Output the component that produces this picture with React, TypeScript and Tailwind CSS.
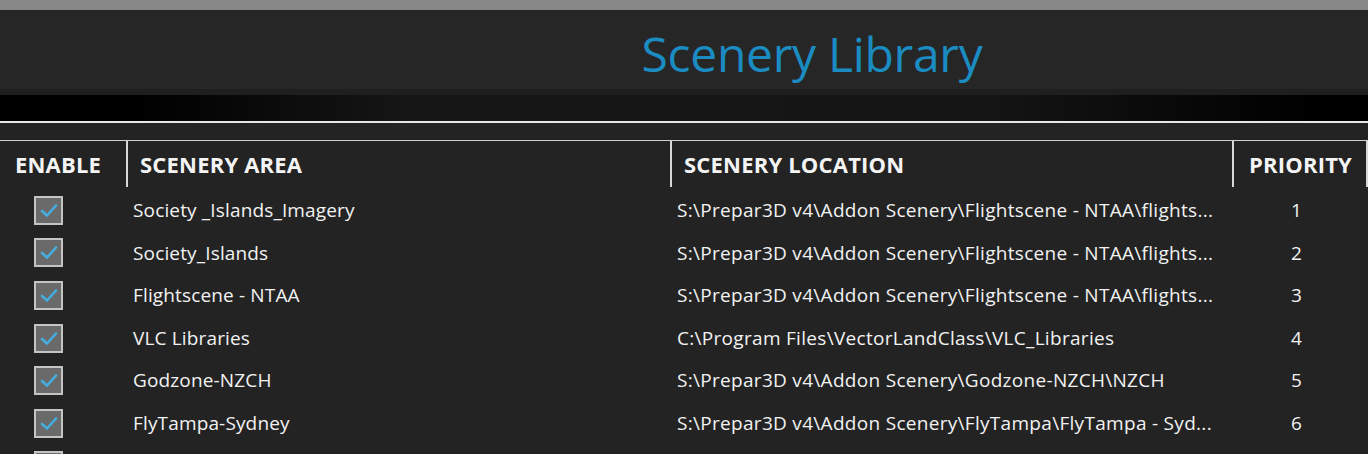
import React from 'react';

type Row = {
  area: string;
  location: string;
  priority: number;
  enabled: boolean;
};

const rows: Row[] = [
  { area: 'Society _Islands_Imagery', location: 'S:\\Prepar3D v4\\Addon Scenery\\Flightscene - NTAA\\flights...', priority: 1, enabled: true },
  { area: 'Society_Islands', location: 'S:\\Prepar3D v4\\Addon Scenery\\Flightscene - NTAA\\flights...', priority: 2, enabled: true },
  { area: 'Flightscene - NTAA', location: 'S:\\Prepar3D v4\\Addon Scenery\\Flightscene - NTAA\\flights...', priority: 3, enabled: true },
  { area: 'VLC Libraries', location: 'C:\\Program Files\\VectorLandClass\\VLC_Libraries', priority: 4, enabled: true },
  { area: 'Godzone-NZCH', location: 'S:\\Prepar3D v4\\Addon Scenery\\Godzone-NZCH\\NZCH', priority: 5, enabled: true },
  { area: 'FlyTampa-Sydney', location: 'S:\\Prepar3D v4\\Addon Scenery\\FlyTampa\\FlyTampa - Syd...', priority: 6, enabled: true },
  { area: '', location: '', priority: 7, enabled: false },
];

const Checkbox = ({ checked }: { checked: boolean }) => (
  <div className="w-[29px] h-[29px] border-2 border-[#c4c4c4] bg-[#6a6a6a] flex items-center justify-center">
    {checked && (
      <svg width="18" height="15" viewBox="0 0 18 15">
        <path d="M2 8 L7 12.5 L16 2.5" fill="none" stroke="#44aee0" strokeWidth="2.6" strokeLinecap="round" strokeLinejoin="round" />
      </svg>
    )}
  </div>
);

const HeaderCell = ({ label, className = '' }: { label: string; className?: string }) => (
  <div className={`h-full flex items-center border-r-2 border-[#d8d8d8] ${className}`}>
    <span className="text-[22px] font-bold text-[#f4f4f4] tracking-[0.2px] pt-[1px]">{label}</span>
  </div>
);

export default function App() {
  return (
    <div
      className="w-[1368px] h-[454px] overflow-hidden bg-[#232323] flex flex-col"
      style={{ fontFamily: '"Open Sans", "Noto Sans", "Liberation Sans", sans-serif' }}
    >
      {/* top window strip */}
      <div className="h-[10px] bg-[#888888] shrink-0" />

      {/* title bar */}
      <div className="h-[85px] shrink-0 bg-[#262626] border-b-[6px] border-[#1f1f1f] flex items-center justify-center">
        <h1 className="ml-[256px] text-[48px] leading-none text-[#1b8cc2] tracking-[-0.3px] pt-[9px]">Scenery Library</h1>
      </div>

      {/* dark shaded band */}
      <div className="h-[26px] shrink-0 bg-[linear-gradient(to_right,#000000_0%,#000000_10%,#161616_30%,#151515_72%,#000000_96%)]" />

      {/* separator */}
      <div className="h-[2px] shrink-0 bg-[#e6e6e6]" />
      <div className="h-[17px] shrink-0 bg-[#232323]" />
      <div className="h-[1px] shrink-0 bg-[#cfcfcf]" />

      {/* column headers */}
      <div className="h-[46px] shrink-0 grid grid-cols-[128px_544px_562px_134px]">
        <HeaderCell label="ENABLE" className="pl-[15px]" />
        <HeaderCell label="SCENERY AREA" className="pl-[12px]" />
        <HeaderCell label="SCENERY LOCATION" className="pl-[12px]" />
        <HeaderCell label="PRIORITY" className="pl-[15px]" />
      </div>

      {/* rows */}
      <div className="flex flex-col pt-[2px]">
        {rows.map((r) => (
          <div key={r.priority} className="h-[42.6px] shrink-0 grid grid-cols-[128px_544px_562px_134px] items-center text-[19px] text-[#f2f2f2]">
            <div className="pl-[34px]">
              <Checkbox checked={r.enabled} />
            </div>
            <div className="pl-[5px] whitespace-nowrap tracking-[0.15px]">{r.area}</div>
            <div className="pl-[5px] whitespace-nowrap tracking-[0.3px]">{r.location}</div>
            <div className="pl-[57px]">{r.area ? r.priority : ''}</div>
          </div>
        ))}
      </div>
    </div>
  );
}
